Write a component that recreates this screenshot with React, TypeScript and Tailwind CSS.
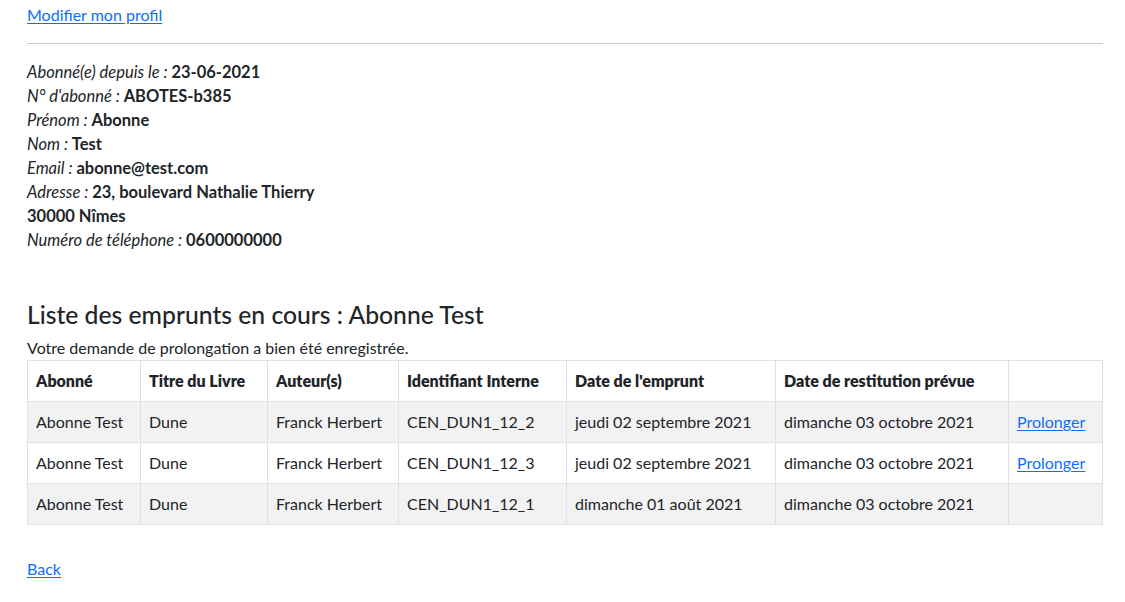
const rows = [
  { date: "jeudi 02 septembre 2021", id: "CEN_DUN1_12_2", link: true },
  { date: "jeudi 02 septembre 2021", id: "CEN_DUN1_12_3", link: true },
  { date: "dimanche 01 août 2021", id: "CEN_DUN1_12_1", link: false },
];

const profile: [string, string][] = [
  ["Abonné(e) depuis le :", "23-06-2021"],
  ["N° d'abonné :", "ABOTES-b385"],
  ["Prénom :", "Abonne"],
  ["Nom :", "Test"],
  ["Email :", "abonne@test.com"],
  ["Adresse :", "23, boulevard Nathalie Thierry"],
  ["", "30000 Nîmes"],
  ["Numéro de téléphone :", "0600000000"],
];

const cell = "border border-[#dee2e6] px-2 py-2 leading-6 text-left";

export default function App() {
  return (
    <div className="min-h-[602px] bg-white pl-[27px] pr-[22px] pt-[3px] font-['Lato','Liberation_Sans',sans-serif] text-base leading-6 text-[#212529]">
      <a href="#" className="text-[#0d6efd] underline underline-offset-2">
        Modifier mon profil
      </a>
      <hr className="my-4 border-t border-[#c8c9ca]" />
      <div className="text-[16.5px]">
        {profile.map(([label, value], i) => (
          <div key={i}>
            {label && <i>{label} </i>}
            <b>{value}</b>
          </div>
        ))}
      </div>

      <h4 className="mt-[48px] mb-[7px] text-[24.7px] font-medium leading-[29px]">
        Liste des emprunts en cours : Abonne Test
      </h4>
      <p>Votre demande de prolongation a bien été enregistrée.</p>
      <table className="w-full table-fixed border-collapse">
        <colgroup>
          <col className="w-[113px]" />
          <col className="w-[127px]" />
          <col className="w-[131px]" />
          <col className="w-[168px]" />
          <col className="w-[209px]" />
          <col className="w-[233px]" />
          <col />
        </colgroup>
        <thead>
          <tr>
            <th className={`${cell} font-extrabold`}>Abonné</th>
            <th className={`${cell} font-extrabold`}>Titre du Livre</th>
            <th className={`${cell} font-extrabold`}>Auteur(s)</th>
            <th className={`${cell} font-extrabold`}>Identifiant Interne</th>
            <th className={`${cell} font-extrabold`}>Date de l'emprunt</th>
            <th className={`${cell} font-extrabold`}>Date de restitution prévue</th>
            <th className={cell}></th>
          </tr>
        </thead>
        <tbody>
          {rows.map((r, i) => (
            <tr key={i} className={i % 2 === 0 ? "bg-[#f2f2f2]" : "bg-white"}>
              <td className={cell}>Abonne Test</td>
              <td className={cell}>Dune</td>
              <td className={cell}>Franck Herbert</td>
              <td className={cell}>{r.id}</td>
              <td className={cell}>{r.date}</td>
              <td className={cell}>dimanche 03 octobre 2021</td>
              <td className={cell}>
                {r.link && (
                  <a href="#" className="text-[#0d6efd] underline underline-offset-2">
                    Prolonger
                  </a>
                )}
              </td>
            </tr>
          ))}
        </tbody>
      </table>

      <div className="mt-8">
        <a href="#" className="text-[#0d6efd] underline underline-offset-2">
          Back
        </a>
      </div>
    </div>
  );
}
